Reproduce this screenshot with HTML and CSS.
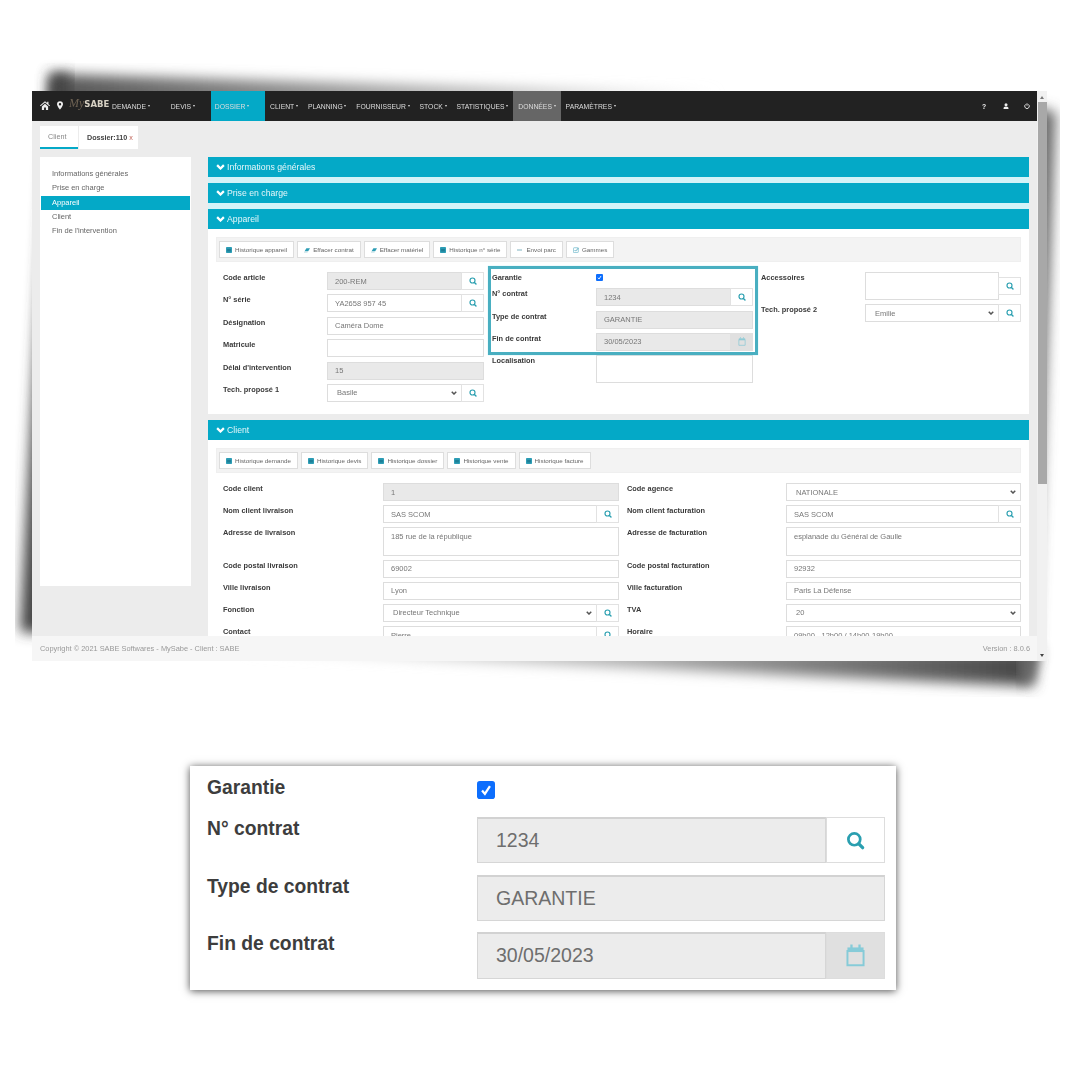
FILE: index.html
```html
<!DOCTYPE html>
<html lang="fr">

<head>
    <meta charset="UTF-8">
    <meta name="viewport" content="width=device-width, initial-scale=1.0">
    <title>MySabe - Dossier</title>
    <link rel="stylesheet" href="styles.css">
</head>

<body>

    <svg width="0" height="0" class="defs">
        <symbol id="i-search" viewBox="0 0 16 16"><circle cx="7" cy="7" r="5" fill="none" stroke="currentColor" stroke-width="2.3"/><path d="M10.800 10.800l3.200 3.200" stroke="currentColor" stroke-width="2.800" stroke-linecap="round"/></symbol>
        <symbol id="i-chevron" viewBox="0 0 12 8"><path d="M1.500 1.500L6 6l4.500-4.500" fill="none" stroke="currentColor" stroke-width="3"/></symbol>
        <symbol id="i-table" viewBox="0 0 8 8"><rect width="8" height="8" rx="1" fill="#2d9db5"/><rect x="1.500" y="2.500" width="5" height="3.500" fill="#1d7f97"/></symbol>
        <symbol id="i-eraser" viewBox="0 0 10 8"><path d="M4 1h6L7 6H1z" fill="#2d9db5"/><path d="M0 7h6v1H0z" fill="#9ccbd6"/></symbol>
        <symbol id="i-arrow" viewBox="0 0 10 8"><path d="M0 3.500h8.500v1H0z" fill="#2a8097"/></symbol>
        <symbol id="i-check" viewBox="0 0 8 8"><rect x=".5" y="1" width="6.500" height="6.500" rx="1" fill="none" stroke="#6fb8cb"/><path d="M2 4l1.500 1.500L7.500 1" fill="none" stroke="#3d9db5"/></symbol>
        <symbol id="i-calendar" viewBox="0 0 16 20"><path d="M1 6h14v12.500H1z" fill="none" stroke="currentColor" stroke-width="1.700"/><path d="M1 3h14v4H1z" fill="currentColor"/><path d="M3.500 .5h2v3h-2zM10.500 .5h2v3h-2z" fill="currentColor"/></symbol>
        <symbol id="i-tick" viewBox="0 0 16 16"><rect width="16" height="16" rx="2.500" fill="#0d6efd"/><path d="M4.500 8.500l2.500 3L11.500 4.500" fill="none" stroke="#fff" stroke-width="2"/></symbol>
    </svg>

    <!-- ombre portée derrière la capture -->
    <svg class="window-shadow" width="1080" height="720" viewBox="0 0 1080 720">
        <defs>
            <filter id="soft" x="-10%" y="-30%" width="120%" height="160%"><feGaussianBlur stdDeviation="6.500"/></filter>
            <linearGradient id="fade-top" x1="0" y1="0" x2="1" y2="0">
                <stop offset="0" stop-color="#555"/>
                <stop offset="0.500" stop-color="#a5a5a5"/>
                <stop offset="1" stop-color="#e5e5e5"/>
            </linearGradient>
            <linearGradient id="fade-bottom" x1="0" y1="0" x2="1" y2="0">
                <stop offset="0" stop-color="#eee"/>
                <stop offset="0.500" stop-color="#aaa"/>
                <stop offset="1" stop-color="#444"/>
            </linearGradient>
        </defs>
        <path d="M50 74L720 94L50 110z" fill="url(#fade-top)" filter="url(#soft)"/>
        <path d="M50 74L70 74L70 634L20 632z" fill="#444" filter="url(#soft)"/>
        <path d="M240 650L1040 650L1030 686z" fill="url(#fade-bottom)" filter="url(#soft)"/>
        <path d="M1030 106L1056 112L1034 686L1020 680z" fill="#6a6a6a" filter="url(#soft)"/>
    </svg>

    <div class="window">
        <div class="app">
            <div class="nav">
                <svg class="nav-home" viewBox="0 0 16 14"><path d="M8 0L0 7l1 1.200L8 2.300l7 5.900L16 7l-2.500-2.200V1h-2v2zM3 8.500V14h3.500v-4h3v4H13V8.500L8 4.200z" fill="#eee"/></svg>
                <svg class="nav-pin" viewBox="0 0 10 14"><path d="M5 0a5 5 0 0 0-5 5c0 3 5 9 5 9s5-6 5-9a5 5 0 0 0-5-5zm0 7a2 2 0 1 1 0-4 2 2 0 0 1 0 4z" fill="#eee"/></svg>
                <div class="logo"><span class="logo-my">My</span><span class="logo-sabe">SABE</span></div>
                <div class="nav-item nav-item--wide">DEMANDE<span class="caret"></span></div>
                <div class="nav-item nav-item--wide">DEVIS<span class="caret"></span></div>
                <div class="nav-item nav-item--wide nav-item--active">DOSSIER<span class="caret"></span></div>
                <div class="nav-item">CLIENT<span class="caret"></span></div>
                <div class="nav-item">PLANNING<span class="caret"></span></div>
                <div class="nav-item">FOURNISSEUR<span class="caret"></span></div>
                <div class="nav-item">STOCK<span class="caret"></span></div>
                <div class="nav-item">STATISTIQUES<span class="caret"></span></div>
                <div class="nav-item nav-item--gray">DONNÉES<span class="caret"></span></div>
                <div class="nav-item">PARAMÈTRES<span class="caret"></span></div>
                <div class="nav-right">
                    <span class="nav-help">?</span>
                    <svg class="nav-icon" viewBox="0 0 10 10"><circle cx="5" cy="2.800" r="2.500" fill="#eee"/><path d="M.8 10c0-3 1.500-4.200 4.200-4.200S9.200 7 9.200 10z" fill="#eee"/></svg>
                    <svg class="nav-icon" viewBox="0 0 10 10"><path d="M3 2.200a3.800 3.800 0 1 0 4 0" fill="none" stroke="#eee" stroke-width="1.500"/><path d="M5 .5v4" stroke="#eee" stroke-width="1.500"/></svg>
                </div>
            </div>

            <div class="content">
                <div class="tabs">
                    <div class="tab tab--current">Client</div>
                    <div class="tab tab--file">Dossier:110 <span class="tab-close">x</span></div>
                </div>

                <div class="columns">
                    <div class="sidebar">
                        <div class="side-item">Informations générales</div>
                        <div class="side-item">Prise en charge</div>
                        <div class="side-item side-item--active">Appareil</div>
                        <div class="side-item">Client</div>
                        <div class="side-item">Fin de l'intervention</div>
                    </div>

                    <div class="main">
                        <div class="bar bar--closed"><svg class="bar-chevron"><use href="#i-chevron"/></svg>Informations générales</div>
                        <div class="bar bar--closed"><svg class="bar-chevron"><use href="#i-chevron"/></svg>Prise en charge</div>
                        <div class="bar"><svg class="bar-chevron"><use href="#i-chevron"/></svg>Appareil</div>

                        <div class="panel panel--device">
                            <div class="toolbar">
                                <div class="btn"><svg class="btn-icon"><use href="#i-table"/></svg>Historique appareil</div>
                                <div class="btn"><svg class="btn-icon"><use href="#i-eraser"/></svg>Effacer contrat</div>
                                <div class="btn"><svg class="btn-icon"><use href="#i-eraser"/></svg>Effacer matériel</div>
                                <div class="btn"><svg class="btn-icon"><use href="#i-table"/></svg>Historique n° série</div>
                                <div class="btn"><svg class="btn-icon"><use href="#i-arrow"/></svg>Envoi parc</div>
                                <div class="btn"><svg class="btn-icon"><use href="#i-check"/></svg>Gammes</div>
                            </div>

                            <div class="device-form">
                                <div class="device-col">
                                    <div class="lbl">Code article</div>
                                    <div class="group"><div class="ctl ctl--off">200-REM</div><div class="addon"><svg class="addon-icon"><use href="#i-search"/></svg></div></div>
                                    <div class="lbl">N° série</div>
                                    <div class="group"><div class="ctl">YA2658 957 45</div><div class="addon"><svg class="addon-icon"><use href="#i-search"/></svg></div></div>
                                    <div class="lbl">Désignation</div>
                                    <div class="ctl">Caméra Dome</div>
                                    <div class="lbl">Matricule</div>
                                    <div class="ctl"></div>
                                    <div class="lbl">Délai d'intervention</div>
                                    <div class="ctl ctl--off">15</div>
                                    <div class="lbl">Tech. proposé 1</div>
                                    <div class="group"><div class="ctl ctl--select">Basile<svg class="select-arrow"><use href="#i-chevron"/></svg></div><div class="addon"><svg class="addon-icon"><use href="#i-search"/></svg></div></div>
                                </div>

                                <div class="device-col device-col--warranty">
                                    <div class="lbl">Garantie</div>
                                    <div class="tick-cell"><svg class="tick"><use href="#i-tick"/></svg></div>
                                    <div class="lbl">N° contrat</div>
                                    <div class="group"><div class="ctl ctl--off">1234</div><div class="addon"><svg class="addon-icon"><use href="#i-search"/></svg></div></div>
                                    <div class="lbl">Type de contrat</div>
                                    <div class="ctl ctl--off">GARANTIE</div>
                                    <div class="lbl">Fin de contrat</div>
                                    <div class="group"><div class="ctl ctl--off">30/05/2023</div><div class="addon addon--off"><svg class="addon-icon addon-icon--cal"><use href="#i-calendar"/></svg></div></div>
                                    <div class="lbl">Localisation</div>
                                    <div class="ctl ctl--area"></div>
                                    <div class="highlight"></div>
                                </div>

                                <div class="device-col device-col--extra">
                                    <div class="lbl">Accessoires</div>
                                    <div class="group group--center"><div class="ctl ctl--area"></div><div class="addon addon--short"><svg class="addon-icon"><use href="#i-search"/></svg></div></div>
                                    <div class="lbl">Tech. proposé 2</div>
                                    <div class="group"><div class="ctl ctl--select">Emilie<svg class="select-arrow"><use href="#i-chevron"/></svg></div><div class="addon"><svg class="addon-icon"><use href="#i-search"/></svg></div></div>
                                </div>
                            </div>
                        </div>

                        <div class="bar"><svg class="bar-chevron"><use href="#i-chevron"/></svg>Client</div>

                        <div class="panel">
                            <div class="toolbar">
                                <div class="btn"><svg class="btn-icon"><use href="#i-table"/></svg>Historique demande</div>
                                <div class="btn"><svg class="btn-icon"><use href="#i-table"/></svg>Historique devis</div>
                                <div class="btn"><svg class="btn-icon"><use href="#i-table"/></svg>Historique dossier</div>
                                <div class="btn"><svg class="btn-icon"><use href="#i-table"/></svg>Historique vente</div>
                                <div class="btn"><svg class="btn-icon"><use href="#i-table"/></svg>Historique facture</div>
                            </div>

                            <div class="client-form">
                                <div class="lbl">Code client</div>
                                <div class="ctl ctl--off">1</div>
                                <div class="lbl lbl--right">Code agence</div>
                                <div class="ctl ctl--select">NATIONALE<svg class="select-arrow"><use href="#i-chevron"/></svg></div>

                                <div class="lbl">Nom client livraison</div>
                                <div class="group"><div class="ctl">SAS SCOM</div><div class="addon"><svg class="addon-icon"><use href="#i-search"/></svg></div></div>
                                <div class="lbl lbl--right">Nom client facturation</div>
                                <div class="group"><div class="ctl">SAS SCOM</div><div class="addon"><svg class="addon-icon"><use href="#i-search"/></svg></div></div>

                                <div class="lbl">Adresse de livraison</div>
                                <div class="ctl ctl--area">185 rue de la république</div>
                                <div class="lbl lbl--right">Adresse de facturation</div>
                                <div class="ctl ctl--area">esplanade du Général de Gaulle</div>

                                <div class="lbl">Code postal livraison</div>
                                <div class="ctl">69002</div>
                                <div class="lbl lbl--right">Code postal facturation</div>
                                <div class="ctl">92932</div>

                                <div class="lbl">Ville livraison</div>
                                <div class="ctl">Lyon</div>
                                <div class="lbl lbl--right">Ville facturation</div>
                                <div class="ctl">Paris La Défense</div>

                                <div class="lbl">Fonction</div>
                                <div class="group"><div class="ctl ctl--select">Directeur Technique<svg class="select-arrow"><use href="#i-chevron"/></svg></div><div class="addon"><svg class="addon-icon"><use href="#i-search"/></svg></div></div>
                                <div class="lbl lbl--right">TVA</div>
                                <div class="ctl ctl--select">20<svg class="select-arrow"><use href="#i-chevron"/></svg></div>

                                <div class="lbl">Contact</div>
                                <div class="group"><div class="ctl">Pierre</div><div class="addon"><svg class="addon-icon"><use href="#i-search"/></svg></div></div>
                                <div class="lbl lbl--right">Horaire</div>
                                <div class="ctl">09h00 - 12h00 / 14h00-19h00</div>
                            </div>
                        </div>
                    </div>
                </div>
            </div>

            <div class="footer">
                <span>Copyright © 2021 SABE Softwares - MySabe - Client : SABE</span>
                <span>Version : 8.0.6</span>
            </div>
        </div>

        <div class="scrollbar">
            <div class="scroll-up"></div>
            <div class="scroll-thumb"></div>
            <div class="scroll-down"></div>
        </div>
    </div>

    <div class="card">
        <div class="card-lbl">Garantie</div>
        <div><svg class="card-tick"><use href="#i-tick"/></svg></div>
        <div class="card-lbl">N° contrat</div>
        <div class="card-group"><div class="card-ctl">1234</div><div class="card-addon"><svg class="card-icon"><use href="#i-search"/></svg></div></div>
        <div class="card-lbl">Type de contrat</div>
        <div class="card-ctl">GARANTIE</div>
        <div class="card-lbl">Fin de contrat</div>
        <div class="card-group"><div class="card-ctl">30/05/2023</div><div class="card-addon card-addon--off"><svg class="card-icon card-icon--cal"><use href="#i-calendar"/></svg></div></div>
    </div>

</body>

</html>
```

FILE: styles.css
```css
* {
    box-sizing: border-box;
}

body {
    margin: 0;
    background: #fff;
    font-family: "Liberation Sans", Arial, sans-serif;
    padding: 91px 0 40px;
}

.defs {
    position: absolute;
}

.window-shadow {
    position: absolute;
    top: 0;
    left: 0;
    z-index: -1;
}

.window {
    display: flex;
    width: 1015px;
    height: 570px;
    margin-left: 32px;
    filter: blur(0.35px);
}

.app {
    width: 1005px;
    display: flex;
    flex-direction: column;
}

/* barre du haut */
.nav {
    display: flex;
    align-items: stretch;
    height: 30px;
    padding-left: 8px;
    background: #222;
    color: #ddd;
    font-size: 6.8px;
}

.nav-home {
    width: 10px;
    height: 9px;
    margin: 10px 7px 0 0;
}

.nav-pin {
    width: 6px;
    height: 9px;
    margin: 10px 6px 0 0;
}

.logo {
    width: 38px;
    padding-top: 6px;
    line-height: 12px;
    white-space: nowrap;
}

.logo-my {
    font-family: "Liberation Serif", serif;
    font-style: italic;
    font-size: 12px;
    color: #6d6152;
}

.logo-sabe {
    font-family: "DejaVu Sans", sans-serif;
    font-weight: bold;
    font-size: 8.5px;
    color: #d8d2c4;
}

.nav-item {
    display: flex;
    align-items: center;
    padding: 0 5px;
    white-space: nowrap;
}

.nav-item--wide {
    padding-right: 16px;
}

.nav-item--active {
    background: #04a9c7;
    padding-left: 4px;
}

.nav-item--gray {
    background: #666;
}

.caret {
    margin-left: 1.7px;
    border-top: 2px solid #ddd;
    border-left: 1.5px solid transparent;
    border-right: 1.5px solid transparent;
}

.nav-right {
    display: flex;
    align-items: center;
    gap: 15px;
    margin-left: auto;
    padding-right: 7px;
}

.nav-help {
    width: 6px;
    font-weight: bold;
    color: #eee;
}

.nav-icon {
    width: 6px;
    height: 6px;
}

/* contenu */
.content {
    height: 515px;
    overflow: hidden;
    padding: 5px 8px 0;
    background: #ececec;
}

.tabs {
    display: flex;
    height: 23px;
    margin-bottom: 8px;
    gap: 1px;
    font-size: 7.2px;
}

.tab {
    display: flex;
    align-items: center;
    background: #fff;
}

.tab--current {
    width: 38px;
    padding-left: 8px;
    color: #888;
    border-bottom: 2px solid #04a9c7;
}

.tab--file {
    width: 59px;
    padding-left: 8px;
    font-weight: bold;
    color: #444;
    white-space: pre;
}

.tab-close {
    font-weight: normal;
    color: #c0655a;
}

.columns {
    display: flex;
    gap: 17px;
}

.sidebar {
    width: 151px;
    height: 429px;
    flex-shrink: 0;
    padding-top: 10px;
    background: #fff;
    font-size: 7.5px;
    color: #666;
}

.side-item {
    height: 14.3px;
    line-height: 14.3px;
    margin: 0 1px;
    padding-left: 11px;
}

.side-item--active {
    background: #04a9c7;
    color: #fff;
}

.main {
    width: 821px;
    flex-shrink: 0;
}

.bar {
    display: flex;
    align-items: center;
    height: 20px;
    padding-left: 8px;
    background: #04a9c7;
    color: #e6f7fa;
    font-size: 8.7px;
}

.bar--closed {
    height: 26px;
    border-bottom: 6px solid #d4f3f8;
}

.bar-chevron {
    width: 9px;
    height: 6px;
    margin-right: 2px;
    color: #fff;
}

.panel {
    padding: 8px 8px 0;
    background: #fff;
}

.panel--device {
    height: 185px;
    margin-bottom: 6px;
}

.toolbar {
    display: flex;
    gap: 3px;
    height: 25px;
    padding: 4px 2px;
    background: #f3f3f3;
    border: 1px solid #efefef;
}

.btn {
    display: flex;
    align-items: center;
    height: 17px;
    margin-top: -1px;
    padding: 0 6px;
    background: #fff;
    border: 1px solid #ddd;
    color: #666;
    font-size: 6.25px;
    white-space: nowrap;
}

.btn-icon {
    width: 6px;
    height: 6px;
    margin-right: 3px;
}

.lbl {
    font-size: 7.4px;
    font-weight: bold;
    line-height: 11px;
    color: #3a3a3a;
    white-space: nowrap;
}

.lbl--right {
    padding-left: 8px;
}

/* champs */
.ctl {
    display: flex;
    align-items: center;
    flex: 1;
    min-width: 0;
    height: 100%;
    padding: 0 7px;
    background: #fff;
    border: 1px solid #ddd;
    color: #777;
    font-size: 7.5px;
    white-space: nowrap;
}

.ctl--off {
    background: #e9e9e9;
}

.ctl--area {
    align-items: flex-start;
    padding-top: 4px;
}

.ctl--select {
    justify-content: space-between;
    padding: 0 4px 0 9px;
}

.select-arrow {
    width: 6px;
    height: 4px;
    color: #555;
}

.group {
    display: flex;
    min-width: 0;
}

.group--center {
    align-items: center;
}

.addon {
    display: flex;
    align-items: center;
    justify-content: center;
    width: 23px;
    flex-shrink: 0;
    margin-left: -1px;
    background: #fff;
    border: 1px solid #e2e2e2;
}

.addon--short {
    height: 18px;
}

.addon--off {
    background: #e0e0e0;
    border-color: #e0e0e0;
}

.addon-icon {
    width: 8px;
    height: 8px;
    color: #2a9fb0;
}

.addon-icon--cal {
    height: 9px;
    color: #8fcbd6;
}

.tick {
    display: block;
    width: 7px;
    height: 7px;
    margin-top: 2px;
}

/* formulaire appareil */
.device-form {
    position: relative;
    display: flex;
    gap: 8px;
    margin-top: 10px;
    padding-left: 7px;
}

.device-col {
    position: relative;
    display: grid;
    grid-template-columns: 104px 157px;
    grid-auto-rows: 18px;
    row-gap: 4.4px;
    width: 261px;
}

.device-col--warranty {
    grid-template-rows: 12px 18px 18px 18px 28px;
    row-gap: 4.3px;
}

.device-col--extra {
    grid-template-columns: 104px 156px;
    grid-template-rows: 28px 18px;
    row-gap: 4px;
    width: 260px;
}

.highlight {
    position: absolute;
    top: -6px;
    left: -4px;
    width: 270px;
    height: 89px;
    border: 3px solid #49afc1;
    box-shadow: 0 0 1px #9ae6f2;
}

/* formulaire client */
.client-form {
    display: grid;
    grid-template-columns: 160px 236px 167px 235px;
    grid-template-rows: 18px 18px 28.5px 18px 18px 18px 18px;
    row-gap: 4.1px;
    margin-top: 10px;
    padding-left: 7px;
}

/* pied de page */
.footer {
    display: flex;
    justify-content: space-between;
    align-items: center;
    height: 25px;
    padding: 0 7px 0 8px;
    background: #f6f6f6;
    color: #999;
    font-size: 7.4px;
}

/* ascenseur */
.scrollbar {
    position: relative;
    width: 10px;
    background: #f1f1f1;
}

.scroll-up,
.scroll-down {
    position: absolute;
    left: 3px;
    border-left: 2px solid transparent;
    border-right: 2px solid transparent;
}

.scroll-up {
    top: 5px;
    border-bottom: 3px solid #777;
}

.scroll-down {
    bottom: 4px;
    border-top: 3px solid #444;
}

.scroll-thumb {
    width: 9px;
    height: 382px;
    margin: 11px 0 0 1px;
    background: #a8a8a8;
}

/* encart agrandi */
.card {
    display: grid;
    grid-template-columns: 270px 408px;
    grid-template-rows: 29.5px 46px 46px 46.5px;
    row-gap: 11.5px;
    width: 706px;
    height: 224px;
    margin: 105px 0 0 190px;
    padding: 10px 0 0 17px;
    background: #fff;
    box-shadow: 0 1px 8px rgba(0, 0, 0, 0.7);
}

.card-lbl {
    font-size: 19.3px;
    font-weight: bold;
    line-height: 24px;
    color: #3d3d3d;
}

.card-tick {
    display: block;
    width: 18px;
    height: 18px;
    margin-top: 5px;
}

.card-group {
    display: flex;
}

.card-ctl {
    display: flex;
    align-items: center;
    flex: 1;
    padding-left: 18px;
    background: #ececec;
    border: 1px solid #d6d6d6;
    border-top: 2px solid #d2d2d2;
    color: #6e6e6e;
    font-size: 19.5px;
}

.card-addon {
    display: flex;
    align-items: center;
    justify-content: center;
    width: 59px;
    background: #fff;
    border: 1px solid #ddd;
}

.card-addon--off {
    background: #e0e0e0;
}

.card-icon {
    width: 19px;
    height: 19px;
    color: #2a9fb0;
}

.card-icon--cal {
    height: 23px;
    color: #86cbd8;
}
```
